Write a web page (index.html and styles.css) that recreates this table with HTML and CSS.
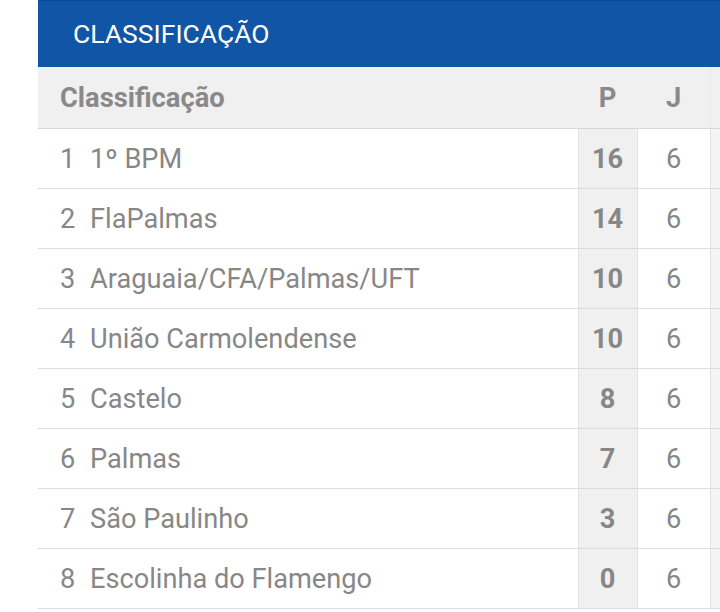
FILE: index.html
```html
<!DOCTYPE html>
<html lang="pt-BR">
<head>
    <meta charset="UTF-8">
    <meta name="viewport" content="width=device-width, initial-scale=1.0">
    <title>Classificação</title>
    <link rel="stylesheet" href="styles.css">
</head>
<body>

<div class="standings">
    <div class="standings-title">CLASSIFICAÇÃO</div>
    <table class="standings-table">
        <thead>
            <tr>
                <th class="col-team">Classificação</th>
                <th class="col-p">P</th>
                <th class="col-j">J</th>
                <th class="col-v"></th>
            </tr>
        </thead>
        <tbody>
            <tr><td class="col-team"><span class="pos">1</span>1º BPM</td><td class="col-p">16</td><td class="col-j">6</td><td class="col-v"></td></tr>
            <tr><td class="col-team"><span class="pos">2</span>FlaPalmas</td><td class="col-p">14</td><td class="col-j">6</td><td class="col-v"></td></tr>
            <tr><td class="col-team"><span class="pos">3</span>Araguaia/CFA/Palmas/UFT</td><td class="col-p">10</td><td class="col-j">6</td><td class="col-v"></td></tr>
            <tr><td class="col-team"><span class="pos">4</span>União Carmolendense</td><td class="col-p">10</td><td class="col-j">6</td><td class="col-v"></td></tr>
            <tr><td class="col-team"><span class="pos">5</span>Castelo</td><td class="col-p">8</td><td class="col-j">6</td><td class="col-v"></td></tr>
            <tr><td class="col-team"><span class="pos">6</span>Palmas</td><td class="col-p">7</td><td class="col-j">6</td><td class="col-v"></td></tr>
            <tr><td class="col-team"><span class="pos">7</span>São Paulinho</td><td class="col-p">3</td><td class="col-j">6</td><td class="col-v"></td></tr>
            <tr><td class="col-team"><span class="pos">8</span>Escolinha do Flamengo</td><td class="col-p">0</td><td class="col-j">6</td><td class="col-v"></td></tr>
        </tbody>
    </table>
</div>

</body>
</html>
```

FILE: styles.css
```css
body {
    margin: 0;
    background-color: #ffffff;
    font-family: Roboto, "Liberation Sans", sans-serif;
    color: #878787;
    overflow: hidden; /* table runs off the right edge */
}
.standings {
    margin-left: 38px;
    width: 802px;
}
.standings-title {
    background-color: #1156a6;
    border-top: 1px solid #0d4890;
    color: #ffffff;
    font-size: 26.5px;
    height: 67px;
    line-height: 66px;
    padding-left: 35px;
    box-sizing: border-box;
}
.standings-table {
    border-collapse: collapse;
    width: 100%;
    table-layout: fixed;
}
.standings-table th {
    background-color: #f0f0f0;
    height: 61px;
    padding: 0;
    font-size: 27.3px;
    font-weight: bold;
    color: #898989;
    border-bottom: 1px solid #d6d6d6;
}
.standings-table td {
    height: 59px;
    padding: 0;
    font-size: 27.2px;
    border-bottom: 1px solid #dcdcdc;
}
.col-team {
    width: 518px;
    padding-left: 22px !important;
    text-align: left;
}
.pos {
    display: inline-block;
    width: 30px;
}
.col-p {
    width: 59px;
    text-align: center;
}
td.col-p {
    background-color: #f0f0f0;
    font-weight: bold;
    border-left: 1px solid #e2e2e2;
    border-right: 1px solid #e2e2e2;
}
.col-j {
    width: 73px;
    text-align: center;
}
td.col-j {
    border-right: 1px solid #e2e2e2;
}
th.col-j {
    border-right: 1px solid #e8e8e8;
}
.col-v {
    width: 130px;
}
td.col-v {
    background-color: #f4f4f4;
}
```
